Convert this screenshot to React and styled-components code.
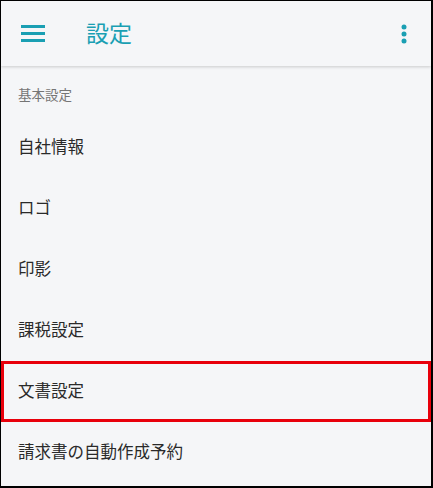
import styled, { createGlobalStyle } from "styled-components";

const GlobalStyle = createGlobalStyle`
  html, body {
    margin: 0;
    padding: 0;
    background: #ffffff;
  }
  body {
    font-family: "Noto Sans CJK JP", "Noto Sans", sans-serif;
  }
`;

const Frame = styled.div`
  width: 433px;
  height: 488px;
  box-sizing: border-box;
  border-style: solid;
  border-color: #000;
  border-width: 1px 2px 2px 1px;
  background: #f5f6f8;
  overflow: hidden;
  display: flex;
  flex-direction: column;
`;

const Toolbar = styled.header`
  height: 65px;
  flex: none;
  display: flex;
  align-items: center;
  padding: 0 14px 0 19px;
  background: #f5f6f8;
  box-shadow: 0 1px 3px rgba(0, 0, 0, 0.18);
  position: relative;
  z-index: 1;
`;

const IconButton = styled.button`
  border: 0;
  background: none;
  padding: 0;
  width: 26px;
  height: 26px;
  display: flex;
  align-items: center;
  justify-content: center;
  color: #1a9fb3;
`;

const Title = styled.h1`
  margin: 0 0 0 40px;
  flex: 1;
  font-size: 23px;
  font-weight: 400;
  color: #1a9fb3;
  line-height: 1;
  padding-bottom: 2px;
`;

const List = styled.div`
  display: flex;
  flex-direction: column;
`;

const SectionLabel = styled.div`
  height: 51px;
  display: flex;
  align-items: center;
  padding: 5px 17px 0;
  font-size: 13.5px;
  color: #757575;
  box-sizing: border-box;
`;

const Row = styled.div`
  height: 61px;
  box-sizing: border-box;
  display: flex;
  align-items: center;
  padding: 0 ${(p) => (p.$active ? 14 : 17)}px 3px;
  font-size: 16.5px;
  color: #2a2a2a;
  border: ${(p) => (p.$active ? "3px solid #e8000b" : "0")};
`;

const items = ["自社情報", "ロゴ", "印影", "課税設定", "文書設定", "請求書の自動作成予約"];

export default function App() {
  return (
    <>
      <GlobalStyle />
      <Frame>
        <Toolbar>
          <IconButton aria-label="menu">
            <svg width="24" height="18" viewBox="0 0 24 18">
              <rect x="0" y="0" width="24" height="3" fill="currentColor" />
              <rect x="0" y="7" width="24" height="3" fill="currentColor" />
              <rect x="0" y="14" width="24" height="3" fill="currentColor" />
            </svg>
          </IconButton>
          <Title>設定</Title>
          <IconButton aria-label="more">
            <svg width="6" height="20" viewBox="0 0 6 20">
              <circle cx="3" cy="3" r="2.5" fill="currentColor" />
              <circle cx="3" cy="10" r="2.5" fill="currentColor" />
              <circle cx="3" cy="17" r="2.5" fill="currentColor" />
            </svg>
          </IconButton>
        </Toolbar>
        <List>
          <SectionLabel>基本設定</SectionLabel>
          {items.map((t) => (
            <Row key={t} $active={t === "文書設定"}>
              {t}
            </Row>
          ))}
        </List>
      </Frame>
    </>
  );
}
